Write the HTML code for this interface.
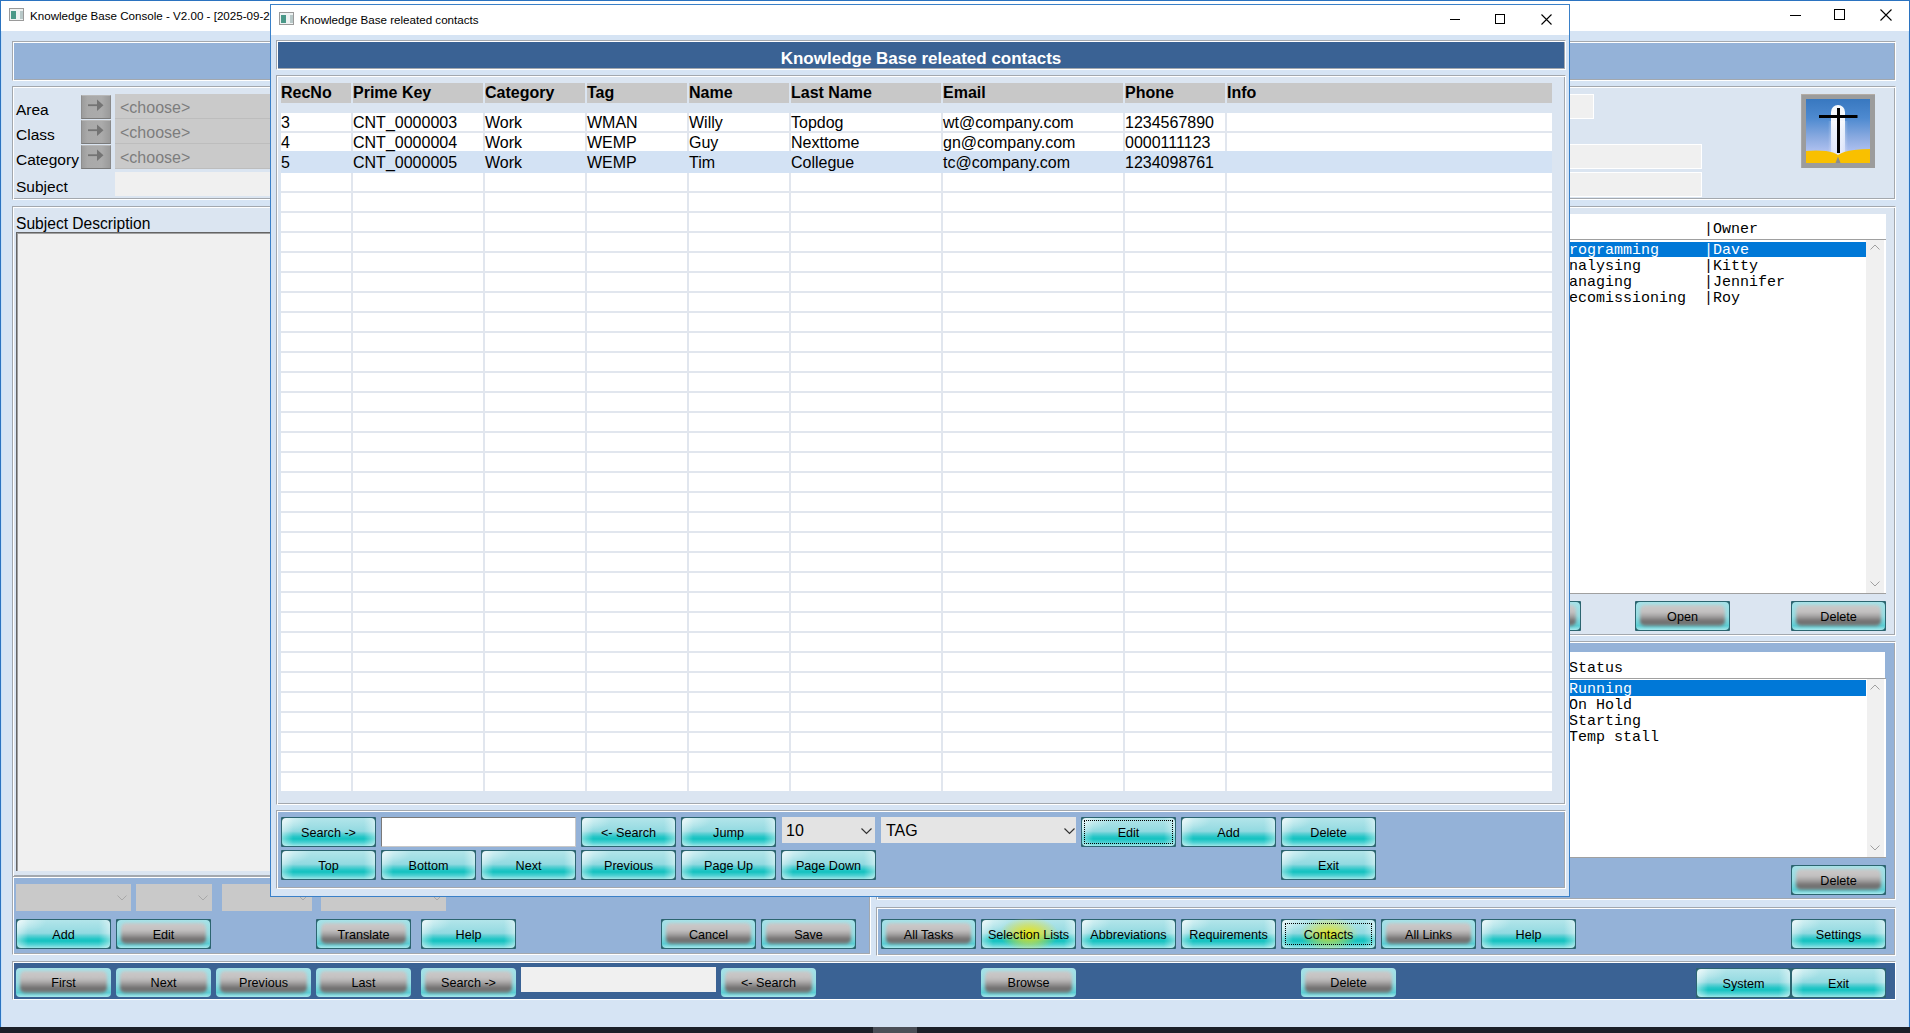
<!DOCTYPE html>
<html><head><meta charset="utf-8"><style>
*{margin:0;padding:0;box-sizing:border-box}
html,body{width:1910px;height:1033px;overflow:hidden;background:#d6e4f4;font-family:"Liberation Sans",sans-serif}
body>div,div.abs,.b,.tx,.et{position:absolute}
div{position:absolute}
.et{border-top:1px solid #a3a8ae;border-left:1px solid #a3a8ae;border-bottom:1px solid #fff;border-right:1px solid #fff;box-shadow:inset 1px 1px 0 #fff, inset -1px -1px 0 #a3a8ae}
.tx{white-space:pre;line-height:20px;color:#000}
.b{border-radius:1px;overflow:hidden}
.b i{position:absolute;left:0;top:0;right:0;bottom:0}
.b span{position:absolute;left:0;right:0;top:0;bottom:0;text-align:center;line-height:32px;font-size:12.6px;color:#000;white-space:pre}
.b.t{background:#2c6570}
.b.t i{left:1px;top:1px;right:1px;bottom:1px;border-radius:4px;
 background:radial-gradient(ellipse 30px 14px at 0 0,rgba(255,255,255,.6),rgba(255,255,255,0)),
 linear-gradient(to right,rgba(255,255,255,.45),rgba(255,255,255,0) 12%,rgba(255,255,255,0) 88%,rgba(255,255,255,.45)),
 linear-gradient(to bottom,#b2e5ea 0%,#a2dfe5 25%,#92dae1 47%,#62d0d5 55%,#26c6c7 67%,#14c2c0 75%,#4fd1d3 88%,#9ce6e8 100%)}
.b.g{background:#2c6570}
.b.g i{left:1px;top:1px;right:1px;bottom:1px;border-radius:4px;
 background:linear-gradient(to bottom,#a6e2e8 0%,#98dce2 50%,#5ccdd3 85%,#a8e8ec 100%)}
.b.g i::after{content:"";position:absolute;left:4px;right:4px;top:3px;bottom:4px;border-radius:5px;filter:blur(1.6px);
 background:linear-gradient(to bottom,#cbc9c9 0%,#c2c0c0 35%,#a2a0a0 55%,#6c6a6a 80%,#7a8484 100%)}
.b.n{background:transparent}
.b.g.nv{background:transparent}
.b.g.nv i{left:0;top:0;right:0;bottom:0}
.b.nv span{line-height:30px}
.lbl{font-size:15.5px}
.mono{font-family:"Liberation Mono",monospace;font-size:15px;line-height:16px;white-space:pre;color:#000}
</style></head>
<body>
<div style="left:0px;top:0px;width:1910px;height:1px;background:#2b73c0"></div>
<div style="left:0px;top:0px;width:1px;height:1027px;background:#2b73c0"></div>
<div style="left:1909px;top:0px;width:1px;height:1027px;background:#2b73c0"></div>
<div style="left:1908px;top:31px;width:1px;height:996px;background:#c4e0fa"></div>
<div style="left:1px;top:31px;width:1px;height:996px;background:#c4e0fa"></div>
<div style="left:1px;top:1px;width:1908px;height:30px;background:#fff"></div>
<div style="left:9px;top:8px;width:15px;height:13px;border:1px solid #9a9a9a;background:#eef2f2"><div style="left:1px;top:2px;width:5px;height:8px;background:#4a9888"></div><div style="left:10px;top:2px;width:3px;height:8px;background:#b8c8c8"></div></div>
<div class="tx" style="left:30px;top:6px;font-size:11.6px;color:#000">Knowledge Base Console - V2.00 - [2025-09-22]</div>
<div style="left:1790px;top:15px;width:11px;height:1px;background:#000"></div>
<div style="left:1834px;top:9px;width:11px;height:11px;border:1px solid #000"></div>
<svg style="position:absolute;left:1880px;top:9px" width="12" height="12"><path d="M0.5 0.5L11.5 11.5M11.5 0.5L0.5 11.5" stroke="#000" stroke-width="1.1"/></svg>
<div style="left:0px;top:1027px;width:1910px;height:6px;background:#1c2028"></div>
<div style="left:873px;top:1027px;width:44px;height:6px;background:#4b4f57"></div>
<div class="et" style="left:12px;top:41px;width:1884px;height:40px;background:#94b2d8;"></div>
<div class="et" style="left:12px;top:86px;width:1884px;height:114px;background:#dbe5f1;"></div>
<div class="tx" style="left:16px;top:100px;font-size:15.5px">Area</div>
<div style="left:81px;top:95px;width:30px;height:24px;background:linear-gradient(to right,#9c9c9c,#a9a9a9 20%,#ababab 70%,#9a9a9a);border:1px solid;border-color:#b8b8b8 #8a8a8a #7a7a7a #8e8e8e"></div>
<svg style="position:absolute;left:88px;top:100px" width="16" height="12" overflow="visible"><path d="M0 5.2H10" stroke="#747474" stroke-width="1.8" fill="none"/><path d="M9 -0.5L15.5 5.2L9 11Z" fill="#747474"/></svg>
<div style="left:115px;top:94px;width:300px;height:25px;background:#cacaca;border-bottom:1px solid #bdbdbd"></div>
<div class="tx" style="left:120px;top:98px;font-size:16px;color:#7d7d7d">&lt;choose&gt;</div>
<div class="tx" style="left:16px;top:125px;font-size:15.5px">Class</div>
<div style="left:81px;top:120px;width:30px;height:24px;background:linear-gradient(to right,#9c9c9c,#a9a9a9 20%,#ababab 70%,#9a9a9a);border:1px solid;border-color:#b8b8b8 #8a8a8a #7a7a7a #8e8e8e"></div>
<svg style="position:absolute;left:88px;top:125px" width="16" height="12" overflow="visible"><path d="M0 5.2H10" stroke="#747474" stroke-width="1.8" fill="none"/><path d="M9 -0.5L15.5 5.2L9 11Z" fill="#747474"/></svg>
<div style="left:115px;top:119px;width:300px;height:25px;background:#cacaca;border-bottom:1px solid #bdbdbd"></div>
<div class="tx" style="left:120px;top:123px;font-size:16px;color:#7d7d7d">&lt;choose&gt;</div>
<div class="tx" style="left:16px;top:150px;font-size:15.5px">Category</div>
<div style="left:81px;top:145px;width:30px;height:24px;background:linear-gradient(to right,#9c9c9c,#a9a9a9 20%,#ababab 70%,#9a9a9a);border:1px solid;border-color:#b8b8b8 #8a8a8a #7a7a7a #8e8e8e"></div>
<svg style="position:absolute;left:88px;top:150px" width="16" height="12" overflow="visible"><path d="M0 5.2H10" stroke="#747474" stroke-width="1.8" fill="none"/><path d="M9 -0.5L15.5 5.2L9 11Z" fill="#747474"/></svg>
<div style="left:115px;top:144px;width:300px;height:25px;background:#cacaca;border-bottom:1px solid #bdbdbd"></div>
<div class="tx" style="left:120px;top:148px;font-size:16px;color:#7d7d7d">&lt;choose&gt;</div>
<div class="tx" style="left:16px;top:177px;font-size:15.5px">Subject</div>
<div style="left:115px;top:172px;width:300px;height:24px;background:#f0f0f0"></div>
<div style="left:1500px;top:94px;width:94px;height:25px;background:#f0f0f0;border:1px solid #fff"></div>
<div style="left:1500px;top:144px;width:202px;height:25px;background:#f0f0f0;border:1px solid #fff"></div>
<div style="left:1500px;top:172px;width:202px;height:25px;background:#f0f0f0;border:1px solid #fff"></div>
<div style="left:1801px;top:94px;width:74px;height:74px;background:#9c9c9c;box-shadow:inset 0 1px 0 #b4aca4, inset 1px 0 0 #a8a8a8">
<svg style="position:absolute;left:5px;top:5px" width="64" height="64" viewBox="0 0 64 64">
<defs><linearGradient id="sky" x1="0" y1="0" x2="0" y2="1"><stop offset="0" stop-color="#3878c0"/><stop offset="0.3" stop-color="#4e8ad0"/><stop offset="0.6" stop-color="#8aaae0"/><stop offset="0.85" stop-color="#b4c4f2"/></linearGradient>
<linearGradient id="glw" x1="0" y1="0" x2="0" y2="1"><stop offset="0" stop-color="#ffffff"/><stop offset="0.25" stop-color="#ffffff"/><stop offset="0.5" stop-color="#e4ecfc"/><stop offset="1" stop-color="#c8d4f8"/></linearGradient>
<linearGradient id="glh" x1="0" y1="0" x2="1" y2="0"><stop offset="0" stop-color="#fff" stop-opacity="0"/><stop offset="0.3" stop-color="#fff" stop-opacity="0.9"/><stop offset="0.7" stop-color="#fff" stop-opacity="0.9"/><stop offset="1" stop-color="#fff" stop-opacity="0"/></linearGradient>
</defs>
<rect width="64" height="64" fill="url(#sky)"/>
<path d="M25 56 V13 A7 7 0 0 1 39 13 V56 Z" fill="url(#glw)" opacity="0.95"/>
<rect x="22" y="22" width="20" height="34" fill="url(#glh)" opacity="0.5"/>
<path d="M0 52 Q10 51 20 52 Q28 53 32 56 Q38 52 48 51 Q56 50 64 50 V64 H0Z" fill="#f9c000"/>
<path d="M29.5 64 L32 57.5 L34.5 64Z" fill="#8c8c8c"/>
<rect x="31" y="9" width="3" height="45" fill="#000"/>
<rect x="13" y="16" width="38.5" height="3" fill="#000"/>
</svg></div>
<div class="et" style="left:12px;top:206px;width:859px;height:671px;background:#dbe5f1;"></div>
<div class="tx" style="left:16px;top:214px;font-size:15.6px">Subject Description</div>
<div style="left:16px;top:232px;width:500px;height:639px;background:#f0f0f0;border-top:1px solid #646464;border-left:1px solid #646464;box-shadow:inset 1px 1px 0 #a0a0a0"></div>
<div class="et" style="left:12px;top:876px;width:859px;height:79px;background:#94b2d8;"></div>
<div style="left:16px;top:884px;width:115px;height:27px;background:#c9c9c9"></div>
<svg style="position:absolute;left:117px;top:895px" width="10" height="6"><path d="M0.5 0.5L5 5L9.5 0.5" stroke="#a8a8a8" fill="none"/></svg>
<div style="left:136px;top:884px;width:76px;height:27px;background:#c9c9c9"></div>
<svg style="position:absolute;left:198px;top:895px" width="10" height="6"><path d="M0.5 0.5L5 5L9.5 0.5" stroke="#a8a8a8" fill="none"/></svg>
<div style="left:222px;top:884px;width:90px;height:27px;background:#c9c9c9"></div>
<svg style="position:absolute;left:298px;top:895px" width="10" height="6"><path d="M0.5 0.5L5 5L9.5 0.5" stroke="#a8a8a8" fill="none"/></svg>
<div style="left:321px;top:884px;width:125px;height:27px;background:#c9c9c9"></div>
<svg style="position:absolute;left:432px;top:895px" width="10" height="6"><path d="M0.5 0.5L5 5L9.5 0.5" stroke="#a8a8a8" fill="none"/></svg>
<div class="b t" style="left:16px;top:919px;width:95px;height:30px;"><i></i><span>Add</span></div>
<div class="b g" style="left:116px;top:919px;width:95px;height:30px;"><i></i><span>Edit</span></div>
<div class="b g" style="left:316px;top:919px;width:95px;height:30px;"><i></i><span>Translate</span></div>
<div class="b t" style="left:421px;top:919px;width:95px;height:30px;"><i></i><span>Help</span></div>
<div class="b g" style="left:661px;top:919px;width:95px;height:30px;"><i></i><span>Cancel</span></div>
<div class="b g" style="left:761px;top:919px;width:95px;height:30px;"><i></i><span>Save</span></div>
<div class="et" style="left:876px;top:206px;width:1020px;height:430px;background:#dbe5f1;"></div>
<div style="left:1500px;top:214px;width:386px;height:25px;background:#fff"></div>
<div class="mono" style="left:1560px;top:222px">                |Owner</div>
<div style="left:1500px;top:239px;width:386px;height:355px;background:#fff;border-top:1px solid #a0a0a0;border-bottom:1px solid #a0a0a0"></div>
<div style="left:1866px;top:240px;width:18px;height:353px;background:#f0f0f0"></div>
<svg style="position:absolute;left:1870px;top:244px" width="10" height="6"><path d="M0.5 5.5L5 1L9.5 5.5" stroke="#a0a0a0" fill="none"/></svg>
<svg style="position:absolute;left:1870px;top:581px" width="10" height="6"><path d="M0.5 0.5L5 5L9.5 0.5" stroke="#a0a0a0" fill="none"/></svg>
<div style="left:1500px;top:242px;width:366px;height:15px;background:#0078d7"></div>
<div class="mono" style="left:1560px;top:243px;color:#fff">Programming     |Dave</div>
<div class="mono" style="left:1560px;top:259px;color:#000">Analysing       |Kitty</div>
<div class="mono" style="left:1560px;top:275px;color:#000">Managing        |Jennifer</div>
<div class="mono" style="left:1560px;top:291px;color:#000">Decomissioning  |Roy</div>
<div class="b g" style="left:1486px;top:601px;width:95px;height:30px;"><i></i><span></span></div>
<div class="b g" style="left:1635px;top:601px;width:95px;height:30px;"><i></i><span>Open</span></div>
<div class="b g" style="left:1791px;top:601px;width:95px;height:30px;"><i></i><span>Delete</span></div>
<div class="et" style="left:876px;top:641px;width:1020px;height:259px;background:#94b2d8;"></div>
<div style="left:1500px;top:652px;width:385px;height:26px;background:#fff"></div>
<div class="mono" style="left:1569px;top:661px">Status</div>
<div style="left:1500px;top:678px;width:386px;height:180px;background:#fff;border-top:1px solid #a0a0a0;border-bottom:1px solid #a0a0a0"></div>
<div style="left:1867px;top:679px;width:17px;height:178px;background:#f0f0f0"></div>
<svg style="position:absolute;left:1870px;top:684px" width="10" height="6"><path d="M0.5 5.5L5 1L9.5 5.5" stroke="#a0a0a0" fill="none"/></svg>
<svg style="position:absolute;left:1870px;top:845px" width="10" height="6"><path d="M0.5 0.5L5 5L9.5 0.5" stroke="#a0a0a0" fill="none"/></svg>
<div style="left:1500px;top:680px;width:366px;height:16px;background:#0078d7"></div>
<div class="mono" style="left:1569px;top:682px;color:#fff">Running</div>
<div class="mono" style="left:1569px;top:698px;color:#000">On Hold</div>
<div class="mono" style="left:1569px;top:714px;color:#000">Starting</div>
<div class="mono" style="left:1569px;top:730px;color:#000">Temp stall</div>
<div class="b g" style="left:1791px;top:865px;width:95px;height:30px;"><i></i><span>Delete</span></div>
<div class="et" style="left:876px;top:907px;width:1020px;height:49px;background:#94b2d8;"></div>
<div class="b g" style="left:881px;top:919px;width:95px;height:30px;"><i></i><span>All Tasks</span></div>
<div class="b t" style="left:981px;top:919px;width:95px;height:30px;"><i></i><b style="position:absolute;left:18px;top:-2px;width:60px;height:34px;background:radial-gradient(ellipse at center,rgba(240,230,0,.95) 0%,rgba(230,225,40,.6) 35%,rgba(200,220,120,0) 70%)"></b><span>Selection Lists</span></div>
<div class="b t" style="left:1081px;top:919px;width:95px;height:30px;"><i></i><span>Abbreviations</span></div>
<div class="b t" style="left:1181px;top:919px;width:95px;height:30px;"><i></i><span>Requirements</span></div>
<div class="b t" style="left:1281px;top:919px;width:95px;height:30px;"><i></i><b style="position:absolute;left:18px;top:-2px;width:60px;height:34px;background:radial-gradient(ellipse at center,rgba(240,230,0,.85) 0%,rgba(230,225,40,.5) 35%,rgba(200,220,120,0) 70%)"></b><b style="position:absolute;left:4px;top:4px;right:4px;bottom:4px;border:1px dotted #000"></b><span>Contacts</span></div>
<div class="b g" style="left:1381px;top:919px;width:95px;height:30px;"><i></i><span>All Links</span></div>
<div class="b t" style="left:1481px;top:919px;width:95px;height:30px;"><i></i><span>Help</span></div>
<div class="b t" style="left:1791px;top:919px;width:95px;height:30px;"><i></i><span>Settings</span></div>
<div style="left:12px;top:961px;width:1884px;height:39px;background:#3a6294;border-top:1px solid #a3a8ae;border-left:1px solid #a3a8ae;border-bottom:1px solid #fff;border-right:1px solid #fff;box-shadow:inset 1px 1px 0 #fff"></div>
<div class="b g nv" style="left:16px;top:968px;width:95px;height:29px;"><i></i><span>First</span></div>
<div class="b g nv" style="left:116px;top:968px;width:95px;height:29px;"><i></i><span>Next</span></div>
<div class="b g nv" style="left:216px;top:968px;width:95px;height:29px;"><i></i><span>Previous</span></div>
<div class="b g nv" style="left:316px;top:968px;width:95px;height:29px;"><i></i><span>Last</span></div>
<div class="b g nv" style="left:421px;top:968px;width:95px;height:29px;"><i></i><span>Search -&gt;</span></div>
<div class="b g nv" style="left:721px;top:968px;width:95px;height:29px;"><i></i><span>&lt;- Search</span></div>
<div class="b g nv" style="left:981px;top:968px;width:95px;height:29px;"><i></i><span>Browse</span></div>
<div class="b g nv" style="left:1301px;top:968px;width:95px;height:29px;"><i></i><span>Delete</span></div>
<div style="left:521px;top:967px;width:195px;height:25px;background:#f0f0f0"></div>
<div class="b t" style="left:1696px;top:968px;width:95px;height:30px;"><i></i><span>System</span></div>
<div class="b t" style="left:1791px;top:968px;width:95px;height:30px;"><i></i><span>Exit</span></div>
<div style="left:270px;top:4px;width:1300px;height:893px;background:#d6e4f4;border:1px solid #3a80c8"></div>
<div style="left:271px;top:5px;width:1298px;height:30px;background:#fff"></div>
<div style="left:279px;top:12px;width:15px;height:13px;border:1px solid #9a9a9a;background:#eef2f2"><div style="left:1px;top:2px;width:5px;height:8px;background:#4a9888"></div><div style="left:10px;top:2px;width:3px;height:8px;background:#b8c8c8"></div></div>
<div class="tx" style="left:300px;top:10px;font-size:11.6px">Knowledge Base releated contacts</div>
<div style="left:1450px;top:19px;width:10px;height:1px;background:#000"></div>
<div style="left:1495px;top:14px;width:10px;height:10px;border:1px solid #000"></div>
<svg style="position:absolute;left:1541px;top:14px" width="11" height="11"><path d="M0.5 0.5L10.5 10.5M10.5 0.5L0.5 10.5" stroke="#000" stroke-width="1.1"/></svg>
<div class="et" style="left:276px;top:40px;width:1290px;height:30px;background:#3a6294;"></div>
<div class="tx" style="left:276px;top:49px;width:1290px;text-align:center;font-size:17px;font-weight:bold;color:#fff">Knowledge Base releated contacts</div>
<div class="et" style="left:276px;top:75px;width:1290px;height:730px;background:#dbe5f1;"></div>
<div style="left:281px;top:83px;width:70px;height:20px;background:#c8c8c8"></div>
<div class="tx" style="left:281px;top:83px;font-size:16px;font-weight:bold">RecNo</div>
<div style="left:353px;top:83px;width:130px;height:20px;background:#c8c8c8"></div>
<div class="tx" style="left:353px;top:83px;font-size:16px;font-weight:bold">Prime Key</div>
<div style="left:485px;top:83px;width:100px;height:20px;background:#c8c8c8"></div>
<div class="tx" style="left:485px;top:83px;font-size:16px;font-weight:bold">Category</div>
<div style="left:587px;top:83px;width:100px;height:20px;background:#c8c8c8"></div>
<div class="tx" style="left:587px;top:83px;font-size:16px;font-weight:bold">Tag</div>
<div style="left:689px;top:83px;width:100px;height:20px;background:#c8c8c8"></div>
<div class="tx" style="left:689px;top:83px;font-size:16px;font-weight:bold">Name</div>
<div style="left:791px;top:83px;width:150px;height:20px;background:#c8c8c8"></div>
<div class="tx" style="left:791px;top:83px;font-size:16px;font-weight:bold">Last Name</div>
<div style="left:943px;top:83px;width:180px;height:20px;background:#c8c8c8"></div>
<div class="tx" style="left:943px;top:83px;font-size:16px;font-weight:bold">Email</div>
<div style="left:1125px;top:83px;width:100px;height:20px;background:#c8c8c8"></div>
<div class="tx" style="left:1125px;top:83px;font-size:16px;font-weight:bold">Phone</div>
<div style="left:1227px;top:83px;width:325px;height:20px;background:#c8c8c8"></div>
<div class="tx" style="left:1227px;top:83px;font-size:16px;font-weight:bold">Info</div>
<div style="left:281px;top:113px;width:1271px;height:678px;background:#e1e6ee"></div>
<div style="left:281px;top:113px;width:70px;height:18px;background:#fff"></div>
<div style="left:353px;top:113px;width:130px;height:18px;background:#fff"></div>
<div style="left:485px;top:113px;width:100px;height:18px;background:#fff"></div>
<div style="left:587px;top:113px;width:100px;height:18px;background:#fff"></div>
<div style="left:689px;top:113px;width:100px;height:18px;background:#fff"></div>
<div style="left:791px;top:113px;width:150px;height:18px;background:#fff"></div>
<div style="left:943px;top:113px;width:180px;height:18px;background:#fff"></div>
<div style="left:1125px;top:113px;width:100px;height:18px;background:#fff"></div>
<div style="left:1227px;top:113px;width:325px;height:18px;background:#fff"></div>
<div style="left:281px;top:133px;width:70px;height:18px;background:#fff"></div>
<div style="left:353px;top:133px;width:130px;height:18px;background:#fff"></div>
<div style="left:485px;top:133px;width:100px;height:18px;background:#fff"></div>
<div style="left:587px;top:133px;width:100px;height:18px;background:#fff"></div>
<div style="left:689px;top:133px;width:100px;height:18px;background:#fff"></div>
<div style="left:791px;top:133px;width:150px;height:18px;background:#fff"></div>
<div style="left:943px;top:133px;width:180px;height:18px;background:#fff"></div>
<div style="left:1125px;top:133px;width:100px;height:18px;background:#fff"></div>
<div style="left:1227px;top:133px;width:325px;height:18px;background:#fff"></div>
<div style="left:281px;top:151px;width:1271px;height:22px;background:#d3e2f4"></div>
<div style="left:281px;top:173px;width:70px;height:18px;background:#fff"></div>
<div style="left:353px;top:173px;width:130px;height:18px;background:#fff"></div>
<div style="left:485px;top:173px;width:100px;height:18px;background:#fff"></div>
<div style="left:587px;top:173px;width:100px;height:18px;background:#fff"></div>
<div style="left:689px;top:173px;width:100px;height:18px;background:#fff"></div>
<div style="left:791px;top:173px;width:150px;height:18px;background:#fff"></div>
<div style="left:943px;top:173px;width:180px;height:18px;background:#fff"></div>
<div style="left:1125px;top:173px;width:100px;height:18px;background:#fff"></div>
<div style="left:1227px;top:173px;width:325px;height:18px;background:#fff"></div>
<div style="left:281px;top:193px;width:70px;height:18px;background:#fff"></div>
<div style="left:353px;top:193px;width:130px;height:18px;background:#fff"></div>
<div style="left:485px;top:193px;width:100px;height:18px;background:#fff"></div>
<div style="left:587px;top:193px;width:100px;height:18px;background:#fff"></div>
<div style="left:689px;top:193px;width:100px;height:18px;background:#fff"></div>
<div style="left:791px;top:193px;width:150px;height:18px;background:#fff"></div>
<div style="left:943px;top:193px;width:180px;height:18px;background:#fff"></div>
<div style="left:1125px;top:193px;width:100px;height:18px;background:#fff"></div>
<div style="left:1227px;top:193px;width:325px;height:18px;background:#fff"></div>
<div style="left:281px;top:213px;width:70px;height:18px;background:#fff"></div>
<div style="left:353px;top:213px;width:130px;height:18px;background:#fff"></div>
<div style="left:485px;top:213px;width:100px;height:18px;background:#fff"></div>
<div style="left:587px;top:213px;width:100px;height:18px;background:#fff"></div>
<div style="left:689px;top:213px;width:100px;height:18px;background:#fff"></div>
<div style="left:791px;top:213px;width:150px;height:18px;background:#fff"></div>
<div style="left:943px;top:213px;width:180px;height:18px;background:#fff"></div>
<div style="left:1125px;top:213px;width:100px;height:18px;background:#fff"></div>
<div style="left:1227px;top:213px;width:325px;height:18px;background:#fff"></div>
<div style="left:281px;top:233px;width:70px;height:18px;background:#fff"></div>
<div style="left:353px;top:233px;width:130px;height:18px;background:#fff"></div>
<div style="left:485px;top:233px;width:100px;height:18px;background:#fff"></div>
<div style="left:587px;top:233px;width:100px;height:18px;background:#fff"></div>
<div style="left:689px;top:233px;width:100px;height:18px;background:#fff"></div>
<div style="left:791px;top:233px;width:150px;height:18px;background:#fff"></div>
<div style="left:943px;top:233px;width:180px;height:18px;background:#fff"></div>
<div style="left:1125px;top:233px;width:100px;height:18px;background:#fff"></div>
<div style="left:1227px;top:233px;width:325px;height:18px;background:#fff"></div>
<div style="left:281px;top:253px;width:70px;height:18px;background:#fff"></div>
<div style="left:353px;top:253px;width:130px;height:18px;background:#fff"></div>
<div style="left:485px;top:253px;width:100px;height:18px;background:#fff"></div>
<div style="left:587px;top:253px;width:100px;height:18px;background:#fff"></div>
<div style="left:689px;top:253px;width:100px;height:18px;background:#fff"></div>
<div style="left:791px;top:253px;width:150px;height:18px;background:#fff"></div>
<div style="left:943px;top:253px;width:180px;height:18px;background:#fff"></div>
<div style="left:1125px;top:253px;width:100px;height:18px;background:#fff"></div>
<div style="left:1227px;top:253px;width:325px;height:18px;background:#fff"></div>
<div style="left:281px;top:273px;width:70px;height:18px;background:#fff"></div>
<div style="left:353px;top:273px;width:130px;height:18px;background:#fff"></div>
<div style="left:485px;top:273px;width:100px;height:18px;background:#fff"></div>
<div style="left:587px;top:273px;width:100px;height:18px;background:#fff"></div>
<div style="left:689px;top:273px;width:100px;height:18px;background:#fff"></div>
<div style="left:791px;top:273px;width:150px;height:18px;background:#fff"></div>
<div style="left:943px;top:273px;width:180px;height:18px;background:#fff"></div>
<div style="left:1125px;top:273px;width:100px;height:18px;background:#fff"></div>
<div style="left:1227px;top:273px;width:325px;height:18px;background:#fff"></div>
<div style="left:281px;top:293px;width:70px;height:18px;background:#fff"></div>
<div style="left:353px;top:293px;width:130px;height:18px;background:#fff"></div>
<div style="left:485px;top:293px;width:100px;height:18px;background:#fff"></div>
<div style="left:587px;top:293px;width:100px;height:18px;background:#fff"></div>
<div style="left:689px;top:293px;width:100px;height:18px;background:#fff"></div>
<div style="left:791px;top:293px;width:150px;height:18px;background:#fff"></div>
<div style="left:943px;top:293px;width:180px;height:18px;background:#fff"></div>
<div style="left:1125px;top:293px;width:100px;height:18px;background:#fff"></div>
<div style="left:1227px;top:293px;width:325px;height:18px;background:#fff"></div>
<div style="left:281px;top:313px;width:70px;height:18px;background:#fff"></div>
<div style="left:353px;top:313px;width:130px;height:18px;background:#fff"></div>
<div style="left:485px;top:313px;width:100px;height:18px;background:#fff"></div>
<div style="left:587px;top:313px;width:100px;height:18px;background:#fff"></div>
<div style="left:689px;top:313px;width:100px;height:18px;background:#fff"></div>
<div style="left:791px;top:313px;width:150px;height:18px;background:#fff"></div>
<div style="left:943px;top:313px;width:180px;height:18px;background:#fff"></div>
<div style="left:1125px;top:313px;width:100px;height:18px;background:#fff"></div>
<div style="left:1227px;top:313px;width:325px;height:18px;background:#fff"></div>
<div style="left:281px;top:333px;width:70px;height:18px;background:#fff"></div>
<div style="left:353px;top:333px;width:130px;height:18px;background:#fff"></div>
<div style="left:485px;top:333px;width:100px;height:18px;background:#fff"></div>
<div style="left:587px;top:333px;width:100px;height:18px;background:#fff"></div>
<div style="left:689px;top:333px;width:100px;height:18px;background:#fff"></div>
<div style="left:791px;top:333px;width:150px;height:18px;background:#fff"></div>
<div style="left:943px;top:333px;width:180px;height:18px;background:#fff"></div>
<div style="left:1125px;top:333px;width:100px;height:18px;background:#fff"></div>
<div style="left:1227px;top:333px;width:325px;height:18px;background:#fff"></div>
<div style="left:281px;top:353px;width:70px;height:18px;background:#fff"></div>
<div style="left:353px;top:353px;width:130px;height:18px;background:#fff"></div>
<div style="left:485px;top:353px;width:100px;height:18px;background:#fff"></div>
<div style="left:587px;top:353px;width:100px;height:18px;background:#fff"></div>
<div style="left:689px;top:353px;width:100px;height:18px;background:#fff"></div>
<div style="left:791px;top:353px;width:150px;height:18px;background:#fff"></div>
<div style="left:943px;top:353px;width:180px;height:18px;background:#fff"></div>
<div style="left:1125px;top:353px;width:100px;height:18px;background:#fff"></div>
<div style="left:1227px;top:353px;width:325px;height:18px;background:#fff"></div>
<div style="left:281px;top:373px;width:70px;height:18px;background:#fff"></div>
<div style="left:353px;top:373px;width:130px;height:18px;background:#fff"></div>
<div style="left:485px;top:373px;width:100px;height:18px;background:#fff"></div>
<div style="left:587px;top:373px;width:100px;height:18px;background:#fff"></div>
<div style="left:689px;top:373px;width:100px;height:18px;background:#fff"></div>
<div style="left:791px;top:373px;width:150px;height:18px;background:#fff"></div>
<div style="left:943px;top:373px;width:180px;height:18px;background:#fff"></div>
<div style="left:1125px;top:373px;width:100px;height:18px;background:#fff"></div>
<div style="left:1227px;top:373px;width:325px;height:18px;background:#fff"></div>
<div style="left:281px;top:393px;width:70px;height:18px;background:#fff"></div>
<div style="left:353px;top:393px;width:130px;height:18px;background:#fff"></div>
<div style="left:485px;top:393px;width:100px;height:18px;background:#fff"></div>
<div style="left:587px;top:393px;width:100px;height:18px;background:#fff"></div>
<div style="left:689px;top:393px;width:100px;height:18px;background:#fff"></div>
<div style="left:791px;top:393px;width:150px;height:18px;background:#fff"></div>
<div style="left:943px;top:393px;width:180px;height:18px;background:#fff"></div>
<div style="left:1125px;top:393px;width:100px;height:18px;background:#fff"></div>
<div style="left:1227px;top:393px;width:325px;height:18px;background:#fff"></div>
<div style="left:281px;top:413px;width:70px;height:18px;background:#fff"></div>
<div style="left:353px;top:413px;width:130px;height:18px;background:#fff"></div>
<div style="left:485px;top:413px;width:100px;height:18px;background:#fff"></div>
<div style="left:587px;top:413px;width:100px;height:18px;background:#fff"></div>
<div style="left:689px;top:413px;width:100px;height:18px;background:#fff"></div>
<div style="left:791px;top:413px;width:150px;height:18px;background:#fff"></div>
<div style="left:943px;top:413px;width:180px;height:18px;background:#fff"></div>
<div style="left:1125px;top:413px;width:100px;height:18px;background:#fff"></div>
<div style="left:1227px;top:413px;width:325px;height:18px;background:#fff"></div>
<div style="left:281px;top:433px;width:70px;height:18px;background:#fff"></div>
<div style="left:353px;top:433px;width:130px;height:18px;background:#fff"></div>
<div style="left:485px;top:433px;width:100px;height:18px;background:#fff"></div>
<div style="left:587px;top:433px;width:100px;height:18px;background:#fff"></div>
<div style="left:689px;top:433px;width:100px;height:18px;background:#fff"></div>
<div style="left:791px;top:433px;width:150px;height:18px;background:#fff"></div>
<div style="left:943px;top:433px;width:180px;height:18px;background:#fff"></div>
<div style="left:1125px;top:433px;width:100px;height:18px;background:#fff"></div>
<div style="left:1227px;top:433px;width:325px;height:18px;background:#fff"></div>
<div style="left:281px;top:453px;width:70px;height:18px;background:#fff"></div>
<div style="left:353px;top:453px;width:130px;height:18px;background:#fff"></div>
<div style="left:485px;top:453px;width:100px;height:18px;background:#fff"></div>
<div style="left:587px;top:453px;width:100px;height:18px;background:#fff"></div>
<div style="left:689px;top:453px;width:100px;height:18px;background:#fff"></div>
<div style="left:791px;top:453px;width:150px;height:18px;background:#fff"></div>
<div style="left:943px;top:453px;width:180px;height:18px;background:#fff"></div>
<div style="left:1125px;top:453px;width:100px;height:18px;background:#fff"></div>
<div style="left:1227px;top:453px;width:325px;height:18px;background:#fff"></div>
<div style="left:281px;top:473px;width:70px;height:18px;background:#fff"></div>
<div style="left:353px;top:473px;width:130px;height:18px;background:#fff"></div>
<div style="left:485px;top:473px;width:100px;height:18px;background:#fff"></div>
<div style="left:587px;top:473px;width:100px;height:18px;background:#fff"></div>
<div style="left:689px;top:473px;width:100px;height:18px;background:#fff"></div>
<div style="left:791px;top:473px;width:150px;height:18px;background:#fff"></div>
<div style="left:943px;top:473px;width:180px;height:18px;background:#fff"></div>
<div style="left:1125px;top:473px;width:100px;height:18px;background:#fff"></div>
<div style="left:1227px;top:473px;width:325px;height:18px;background:#fff"></div>
<div style="left:281px;top:493px;width:70px;height:18px;background:#fff"></div>
<div style="left:353px;top:493px;width:130px;height:18px;background:#fff"></div>
<div style="left:485px;top:493px;width:100px;height:18px;background:#fff"></div>
<div style="left:587px;top:493px;width:100px;height:18px;background:#fff"></div>
<div style="left:689px;top:493px;width:100px;height:18px;background:#fff"></div>
<div style="left:791px;top:493px;width:150px;height:18px;background:#fff"></div>
<div style="left:943px;top:493px;width:180px;height:18px;background:#fff"></div>
<div style="left:1125px;top:493px;width:100px;height:18px;background:#fff"></div>
<div style="left:1227px;top:493px;width:325px;height:18px;background:#fff"></div>
<div style="left:281px;top:513px;width:70px;height:18px;background:#fff"></div>
<div style="left:353px;top:513px;width:130px;height:18px;background:#fff"></div>
<div style="left:485px;top:513px;width:100px;height:18px;background:#fff"></div>
<div style="left:587px;top:513px;width:100px;height:18px;background:#fff"></div>
<div style="left:689px;top:513px;width:100px;height:18px;background:#fff"></div>
<div style="left:791px;top:513px;width:150px;height:18px;background:#fff"></div>
<div style="left:943px;top:513px;width:180px;height:18px;background:#fff"></div>
<div style="left:1125px;top:513px;width:100px;height:18px;background:#fff"></div>
<div style="left:1227px;top:513px;width:325px;height:18px;background:#fff"></div>
<div style="left:281px;top:533px;width:70px;height:18px;background:#fff"></div>
<div style="left:353px;top:533px;width:130px;height:18px;background:#fff"></div>
<div style="left:485px;top:533px;width:100px;height:18px;background:#fff"></div>
<div style="left:587px;top:533px;width:100px;height:18px;background:#fff"></div>
<div style="left:689px;top:533px;width:100px;height:18px;background:#fff"></div>
<div style="left:791px;top:533px;width:150px;height:18px;background:#fff"></div>
<div style="left:943px;top:533px;width:180px;height:18px;background:#fff"></div>
<div style="left:1125px;top:533px;width:100px;height:18px;background:#fff"></div>
<div style="left:1227px;top:533px;width:325px;height:18px;background:#fff"></div>
<div style="left:281px;top:553px;width:70px;height:18px;background:#fff"></div>
<div style="left:353px;top:553px;width:130px;height:18px;background:#fff"></div>
<div style="left:485px;top:553px;width:100px;height:18px;background:#fff"></div>
<div style="left:587px;top:553px;width:100px;height:18px;background:#fff"></div>
<div style="left:689px;top:553px;width:100px;height:18px;background:#fff"></div>
<div style="left:791px;top:553px;width:150px;height:18px;background:#fff"></div>
<div style="left:943px;top:553px;width:180px;height:18px;background:#fff"></div>
<div style="left:1125px;top:553px;width:100px;height:18px;background:#fff"></div>
<div style="left:1227px;top:553px;width:325px;height:18px;background:#fff"></div>
<div style="left:281px;top:573px;width:70px;height:18px;background:#fff"></div>
<div style="left:353px;top:573px;width:130px;height:18px;background:#fff"></div>
<div style="left:485px;top:573px;width:100px;height:18px;background:#fff"></div>
<div style="left:587px;top:573px;width:100px;height:18px;background:#fff"></div>
<div style="left:689px;top:573px;width:100px;height:18px;background:#fff"></div>
<div style="left:791px;top:573px;width:150px;height:18px;background:#fff"></div>
<div style="left:943px;top:573px;width:180px;height:18px;background:#fff"></div>
<div style="left:1125px;top:573px;width:100px;height:18px;background:#fff"></div>
<div style="left:1227px;top:573px;width:325px;height:18px;background:#fff"></div>
<div style="left:281px;top:593px;width:70px;height:18px;background:#fff"></div>
<div style="left:353px;top:593px;width:130px;height:18px;background:#fff"></div>
<div style="left:485px;top:593px;width:100px;height:18px;background:#fff"></div>
<div style="left:587px;top:593px;width:100px;height:18px;background:#fff"></div>
<div style="left:689px;top:593px;width:100px;height:18px;background:#fff"></div>
<div style="left:791px;top:593px;width:150px;height:18px;background:#fff"></div>
<div style="left:943px;top:593px;width:180px;height:18px;background:#fff"></div>
<div style="left:1125px;top:593px;width:100px;height:18px;background:#fff"></div>
<div style="left:1227px;top:593px;width:325px;height:18px;background:#fff"></div>
<div style="left:281px;top:613px;width:70px;height:18px;background:#fff"></div>
<div style="left:353px;top:613px;width:130px;height:18px;background:#fff"></div>
<div style="left:485px;top:613px;width:100px;height:18px;background:#fff"></div>
<div style="left:587px;top:613px;width:100px;height:18px;background:#fff"></div>
<div style="left:689px;top:613px;width:100px;height:18px;background:#fff"></div>
<div style="left:791px;top:613px;width:150px;height:18px;background:#fff"></div>
<div style="left:943px;top:613px;width:180px;height:18px;background:#fff"></div>
<div style="left:1125px;top:613px;width:100px;height:18px;background:#fff"></div>
<div style="left:1227px;top:613px;width:325px;height:18px;background:#fff"></div>
<div style="left:281px;top:633px;width:70px;height:18px;background:#fff"></div>
<div style="left:353px;top:633px;width:130px;height:18px;background:#fff"></div>
<div style="left:485px;top:633px;width:100px;height:18px;background:#fff"></div>
<div style="left:587px;top:633px;width:100px;height:18px;background:#fff"></div>
<div style="left:689px;top:633px;width:100px;height:18px;background:#fff"></div>
<div style="left:791px;top:633px;width:150px;height:18px;background:#fff"></div>
<div style="left:943px;top:633px;width:180px;height:18px;background:#fff"></div>
<div style="left:1125px;top:633px;width:100px;height:18px;background:#fff"></div>
<div style="left:1227px;top:633px;width:325px;height:18px;background:#fff"></div>
<div style="left:281px;top:653px;width:70px;height:18px;background:#fff"></div>
<div style="left:353px;top:653px;width:130px;height:18px;background:#fff"></div>
<div style="left:485px;top:653px;width:100px;height:18px;background:#fff"></div>
<div style="left:587px;top:653px;width:100px;height:18px;background:#fff"></div>
<div style="left:689px;top:653px;width:100px;height:18px;background:#fff"></div>
<div style="left:791px;top:653px;width:150px;height:18px;background:#fff"></div>
<div style="left:943px;top:653px;width:180px;height:18px;background:#fff"></div>
<div style="left:1125px;top:653px;width:100px;height:18px;background:#fff"></div>
<div style="left:1227px;top:653px;width:325px;height:18px;background:#fff"></div>
<div style="left:281px;top:673px;width:70px;height:18px;background:#fff"></div>
<div style="left:353px;top:673px;width:130px;height:18px;background:#fff"></div>
<div style="left:485px;top:673px;width:100px;height:18px;background:#fff"></div>
<div style="left:587px;top:673px;width:100px;height:18px;background:#fff"></div>
<div style="left:689px;top:673px;width:100px;height:18px;background:#fff"></div>
<div style="left:791px;top:673px;width:150px;height:18px;background:#fff"></div>
<div style="left:943px;top:673px;width:180px;height:18px;background:#fff"></div>
<div style="left:1125px;top:673px;width:100px;height:18px;background:#fff"></div>
<div style="left:1227px;top:673px;width:325px;height:18px;background:#fff"></div>
<div style="left:281px;top:693px;width:70px;height:18px;background:#fff"></div>
<div style="left:353px;top:693px;width:130px;height:18px;background:#fff"></div>
<div style="left:485px;top:693px;width:100px;height:18px;background:#fff"></div>
<div style="left:587px;top:693px;width:100px;height:18px;background:#fff"></div>
<div style="left:689px;top:693px;width:100px;height:18px;background:#fff"></div>
<div style="left:791px;top:693px;width:150px;height:18px;background:#fff"></div>
<div style="left:943px;top:693px;width:180px;height:18px;background:#fff"></div>
<div style="left:1125px;top:693px;width:100px;height:18px;background:#fff"></div>
<div style="left:1227px;top:693px;width:325px;height:18px;background:#fff"></div>
<div style="left:281px;top:713px;width:70px;height:18px;background:#fff"></div>
<div style="left:353px;top:713px;width:130px;height:18px;background:#fff"></div>
<div style="left:485px;top:713px;width:100px;height:18px;background:#fff"></div>
<div style="left:587px;top:713px;width:100px;height:18px;background:#fff"></div>
<div style="left:689px;top:713px;width:100px;height:18px;background:#fff"></div>
<div style="left:791px;top:713px;width:150px;height:18px;background:#fff"></div>
<div style="left:943px;top:713px;width:180px;height:18px;background:#fff"></div>
<div style="left:1125px;top:713px;width:100px;height:18px;background:#fff"></div>
<div style="left:1227px;top:713px;width:325px;height:18px;background:#fff"></div>
<div style="left:281px;top:733px;width:70px;height:18px;background:#fff"></div>
<div style="left:353px;top:733px;width:130px;height:18px;background:#fff"></div>
<div style="left:485px;top:733px;width:100px;height:18px;background:#fff"></div>
<div style="left:587px;top:733px;width:100px;height:18px;background:#fff"></div>
<div style="left:689px;top:733px;width:100px;height:18px;background:#fff"></div>
<div style="left:791px;top:733px;width:150px;height:18px;background:#fff"></div>
<div style="left:943px;top:733px;width:180px;height:18px;background:#fff"></div>
<div style="left:1125px;top:733px;width:100px;height:18px;background:#fff"></div>
<div style="left:1227px;top:733px;width:325px;height:18px;background:#fff"></div>
<div style="left:281px;top:753px;width:70px;height:18px;background:#fff"></div>
<div style="left:353px;top:753px;width:130px;height:18px;background:#fff"></div>
<div style="left:485px;top:753px;width:100px;height:18px;background:#fff"></div>
<div style="left:587px;top:753px;width:100px;height:18px;background:#fff"></div>
<div style="left:689px;top:753px;width:100px;height:18px;background:#fff"></div>
<div style="left:791px;top:753px;width:150px;height:18px;background:#fff"></div>
<div style="left:943px;top:753px;width:180px;height:18px;background:#fff"></div>
<div style="left:1125px;top:753px;width:100px;height:18px;background:#fff"></div>
<div style="left:1227px;top:753px;width:325px;height:18px;background:#fff"></div>
<div style="left:281px;top:773px;width:70px;height:18px;background:#fff"></div>
<div style="left:353px;top:773px;width:130px;height:18px;background:#fff"></div>
<div style="left:485px;top:773px;width:100px;height:18px;background:#fff"></div>
<div style="left:587px;top:773px;width:100px;height:18px;background:#fff"></div>
<div style="left:689px;top:773px;width:100px;height:18px;background:#fff"></div>
<div style="left:791px;top:773px;width:150px;height:18px;background:#fff"></div>
<div style="left:943px;top:773px;width:180px;height:18px;background:#fff"></div>
<div style="left:1125px;top:773px;width:100px;height:18px;background:#fff"></div>
<div style="left:1227px;top:773px;width:325px;height:18px;background:#fff"></div>
<div class="tx" style="left:281px;top:113px;font-size:16px">3</div>
<div class="tx" style="left:353px;top:113px;font-size:16px">CNT_0000003</div>
<div class="tx" style="left:485px;top:113px;font-size:16px">Work</div>
<div class="tx" style="left:587px;top:113px;font-size:16px">WMAN</div>
<div class="tx" style="left:689px;top:113px;font-size:16px">Willy</div>
<div class="tx" style="left:791px;top:113px;font-size:16px">Topdog</div>
<div class="tx" style="left:943px;top:113px;font-size:16px">wt@company.com</div>
<div class="tx" style="left:1125px;top:113px;font-size:16px">1234567890</div>
<div class="tx" style="left:281px;top:133px;font-size:16px">4</div>
<div class="tx" style="left:353px;top:133px;font-size:16px">CNT_0000004</div>
<div class="tx" style="left:485px;top:133px;font-size:16px">Work</div>
<div class="tx" style="left:587px;top:133px;font-size:16px">WEMP</div>
<div class="tx" style="left:689px;top:133px;font-size:16px">Guy</div>
<div class="tx" style="left:791px;top:133px;font-size:16px">Nexttome</div>
<div class="tx" style="left:943px;top:133px;font-size:16px">gn@company.com</div>
<div class="tx" style="left:1125px;top:133px;font-size:16px">0000111123</div>
<div class="tx" style="left:281px;top:153px;font-size:16px">5</div>
<div class="tx" style="left:353px;top:153px;font-size:16px">CNT_0000005</div>
<div class="tx" style="left:485px;top:153px;font-size:16px">Work</div>
<div class="tx" style="left:587px;top:153px;font-size:16px">WEMP</div>
<div class="tx" style="left:689px;top:153px;font-size:16px">Tim</div>
<div class="tx" style="left:791px;top:153px;font-size:16px">Collegue</div>
<div class="tx" style="left:943px;top:153px;font-size:16px">tc@company.com</div>
<div class="tx" style="left:1125px;top:153px;font-size:16px">1234098761</div>
<div class="et" style="left:276px;top:810px;width:1290px;height:79px;background:#94b2d8;"></div>
<div class="b t" style="left:281px;top:817px;width:95px;height:30px;"><i></i><span>Search -&gt;</span></div>
<div style="left:381px;top:817px;width:195px;height:30px;background:#fff;border:1px solid #7a7a7a;border-right-color:#c8c8c8;border-bottom-color:#c8c8c8"></div>
<div class="b t" style="left:581px;top:817px;width:95px;height:30px;"><i></i><span>&lt;- Search</span></div>
<div class="b t" style="left:681px;top:817px;width:95px;height:30px;"><i></i><span>Jump</span></div>
<div style="left:782px;top:817px;width:93px;height:26px;background:#e3e3e3"></div>
<div class="tx" style="left:786px;top:821px;font-size:16px">10</div>
<svg style="position:absolute;left:861px;top:828px" width="11" height="7"><path d="M0.5 0.5L5.5 5.5L10.5 0.5" stroke="#333" stroke-width="1.2" fill="none"/></svg>
<div style="left:881px;top:817px;width:195px;height:26px;background:#e5e5e5"></div>
<div class="tx" style="left:886px;top:821px;font-size:16px">TAG</div>
<svg style="position:absolute;left:1064px;top:828px" width="11" height="7"><path d="M0.5 0.5L5.5 5.5L10.5 0.5" stroke="#333" stroke-width="1.2" fill="none"/></svg>
<div class="b t" style="left:1081px;top:817px;width:95px;height:30px;"><i></i><span>Edit</span></div>
<div class="b t" style="left:1181px;top:817px;width:95px;height:30px;"><i></i><span>Add</span></div>
<div class="b t" style="left:1281px;top:817px;width:95px;height:30px;"><i></i><span>Delete</span></div>
<div style="left:1084px;top:820px;width:89px;height:24px;border:1px dotted #000"></div>
<div class="b t" style="left:281px;top:850px;width:95px;height:30px;"><i></i><span>Top</span></div>
<div class="b t" style="left:381px;top:850px;width:95px;height:30px;"><i></i><span>Bottom</span></div>
<div class="b t" style="left:481px;top:850px;width:95px;height:30px;"><i></i><span>Next</span></div>
<div class="b t" style="left:581px;top:850px;width:95px;height:30px;"><i></i><span>Previous</span></div>
<div class="b t" style="left:681px;top:850px;width:95px;height:30px;"><i></i><span>Page Up</span></div>
<div class="b t" style="left:781px;top:850px;width:95px;height:30px;"><i></i><span>Page Down</span></div>
<div class="b t" style="left:1281px;top:850px;width:95px;height:30px;"><i></i><span>Exit</span></div>
</body></html>
